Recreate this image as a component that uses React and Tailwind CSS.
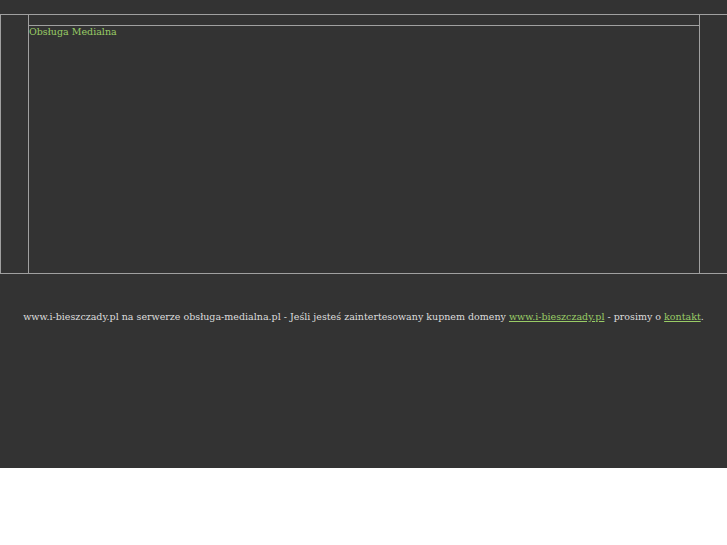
export default function App() {
  return (
    <div className="bg-white min-h-[545px]" style={{ fontFamily: '"DejaVu Serif", serif' }}>
      <div className="bg-[#333333] h-[468px] pt-[14px]">
        <div className="flex h-[260px] border-y border-[#a0a0a0]">
          <div className="w-[29px] border-x border-[#a0a0a0]" />
          <div className="flex-1 flex flex-col">
            <div className="h-[11px] border-b border-[#a0a0a0]" />
            <div className="text-[9.5px] leading-[12px] text-[#99cc66]">Obsługa Medialna</div>
          </div>
          <div className="w-[28px] border-l border-[#a0a0a0]" />
        </div>
        <div className="mt-[37px] text-center text-[9.5px] leading-[12px] text-[#dddddd]">
          www.i-bieszczady.pl na serwerze obsługa-medialna.pl - Jeśli jesteś zaintertesowany kupnem domeny{' '}
          <a href="#" className="text-[#99cc66] underline">www.i-bieszczady.pl</a> - prosimy o{' '}
          <a href="#" className="text-[#99cc66] underline">kontakt</a>.
        </div>
      </div>
    </div>
  );
}
